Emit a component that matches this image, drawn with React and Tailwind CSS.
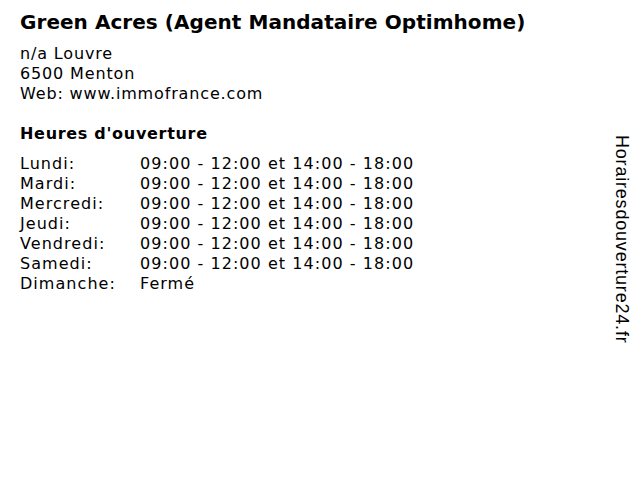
import React from 'react';

const hours = [
  { day: 'Lundi:', time: '09:00 - 12:00 et 14:00 - 18:00' },
  { day: 'Mardi:', time: '09:00 - 12:00 et 14:00 - 18:00' },
  { day: 'Mercredi:', time: '09:00 - 12:00 et 14:00 - 18:00' },
  { day: 'Jeudi:', time: '09:00 - 12:00 et 14:00 - 18:00' },
  { day: 'Vendredi:', time: '09:00 - 12:00 et 14:00 - 18:00' },
  { day: 'Samedi:', time: '09:00 - 12:00 et 14:00 - 18:00' },
  { day: 'Dimanche:', time: 'Fermé' },
];

export default function App() {
  return (
    <div className="flex w-[640px] h-[480px] bg-white text-black font-['DejaVu_Sans',sans-serif]">
      <div className="flex-1 pl-5 pt-[9px]">
        <h1 className="text-[20px] font-bold leading-[26px] tracking-[0.05px]">
          Green Acres (Agent Mandataire Optimhome)
        </h1>
        <div className="mt-[9px] text-[16px] leading-[20px] tracking-[0.85px]">
          <p>n/a Louvre</p>
          <p>6500 Menton</p>
          <p>Web: www.immofrance.com</p>
        </div>
        <h2 className="mt-[20px] text-[16px] font-bold leading-[20px] tracking-[0.7px]">Heures d'ouverture</h2>
        <div className="mt-[10px] text-[16px] leading-[20px] tracking-[1.05px]">
          {hours.map((row) => (
            <div key={row.day} className="grid grid-cols-[120px_1fr]">
              <span>{row.day}</span>
              <span>{row.time}</span>
            </div>
          ))}
        </div>
      </div>
      <div className="w-[40px] pt-[135px] pl-[12px]">
        <span className="[writing-mode:vertical-rl] font-['Liberation_Sans',sans-serif] text-[18px] leading-[20px] tracking-[0.8px]">
          Horairesdouverture24.fr
        </span>
      </div>
    </div>
  );
}
